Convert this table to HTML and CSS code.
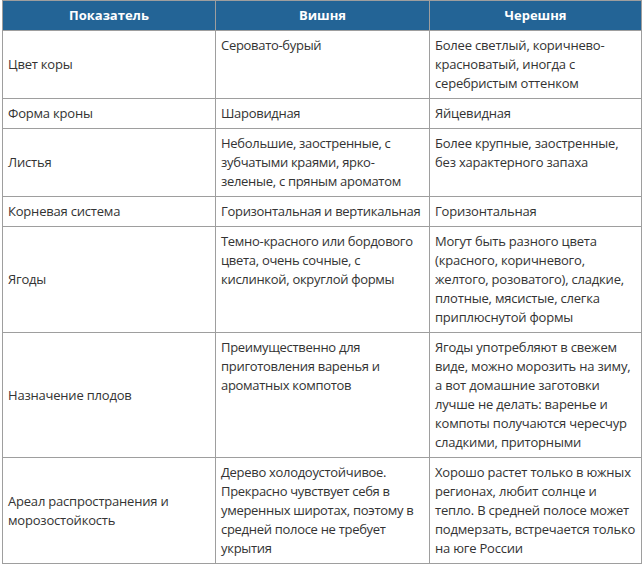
FILE: index.html
```html
<!DOCTYPE html>
<html lang="ru">
<head>
<meta charset="utf-8">
<link rel="stylesheet" href="styles.css">
</head>
<body>
<table class="cmp">
  <colgroup>
    <col class="c1"><col class="c2"><col class="c3">
  </colgroup>
  <thead>
    <tr><th>Показатель</th><th>Вишня</th><th>Черешня</th></tr>
  </thead>
  <tbody>
    <tr><td>Цвет коры</td><td>Серовато-бурый</td><td>Более светлый, коричнево-красноватый, иногда с серебристым оттенком</td></tr>
    <tr><td>Форма кроны</td><td>Шаровидная</td><td>Яйцевидная</td></tr>
    <tr><td>Листья</td><td>Небольшие, заостренные, с зубчатыми краями, ярко-зеленые, с пряным ароматом</td><td>Более крупные, заостренные, без характерного запаха</td></tr>
    <tr><td>Корневая система</td><td>Горизонтальная и вертикальная</td><td>Горизонтальная</td></tr>
    <tr><td>Ягоды</td><td>Темно-красного или бордового цвета, очень сочные, с кислинкой, округлой формы</td><td>Могут быть разного цвета (красного, коричневого, желтого, розоватого), сладкие, плотные, мясистые, слегка приплюснутой формы</td></tr>
    <tr><td>Назначение плодов</td><td>Преимущественно для приготовления варенья и ароматных компотов</td><td>Ягоды употребляют в свежем виде, можно морозить на зиму, а вот домашние заготовки лучше не делать: варенье и компоты получаются чересчур сладкими, приторными</td></tr>
    <tr><td>Ареал распространения и морозостойкость</td><td>Дерево холодоустойчивое. Прекрасно чувствует себя в умеренных широтах, поэтому в средней полосе не требует укрытия</td><td>Хорошо растет только в южных регионах, любит солнце и тепло. В средней полосе может подмерзать, встречается только на юге России</td></tr>
  </tbody>
</table>
</body>
</html>
```

FILE: styles.css
```css
html, body {
  margin: 0;
  padding: 0;
  background: #fff;
}
body {
  padding-left: 2px;
  font-family: "Open Sans", "Noto Sans", sans-serif;
  font-size: 13px;
  line-height: 19px;
  letter-spacing: -0.2px;
  color: #333;
}
.cmp {
  border-collapse: collapse;
  width: 639px;
  table-layout: fixed;
}
.c1 { width: 213px; }
.c2 { width: 214px; }
.c3 { width: 212px; }
.cmp th, .cmp td {
  border: 1px solid #9e9e9e;
  padding: 5px 5px;
  text-align: left;
}
.cmp th {
  background: #236496;
  color: #fff;
  font-weight: 700;
  text-align: center;
  letter-spacing: 0;
  height: 18px;
}
.cmp td {
  vertical-align: top;
}
.cmp td:first-child {
  vertical-align: middle;
}
.cmp td:nth-child(2) {
  letter-spacing: -0.3px;
}
```
